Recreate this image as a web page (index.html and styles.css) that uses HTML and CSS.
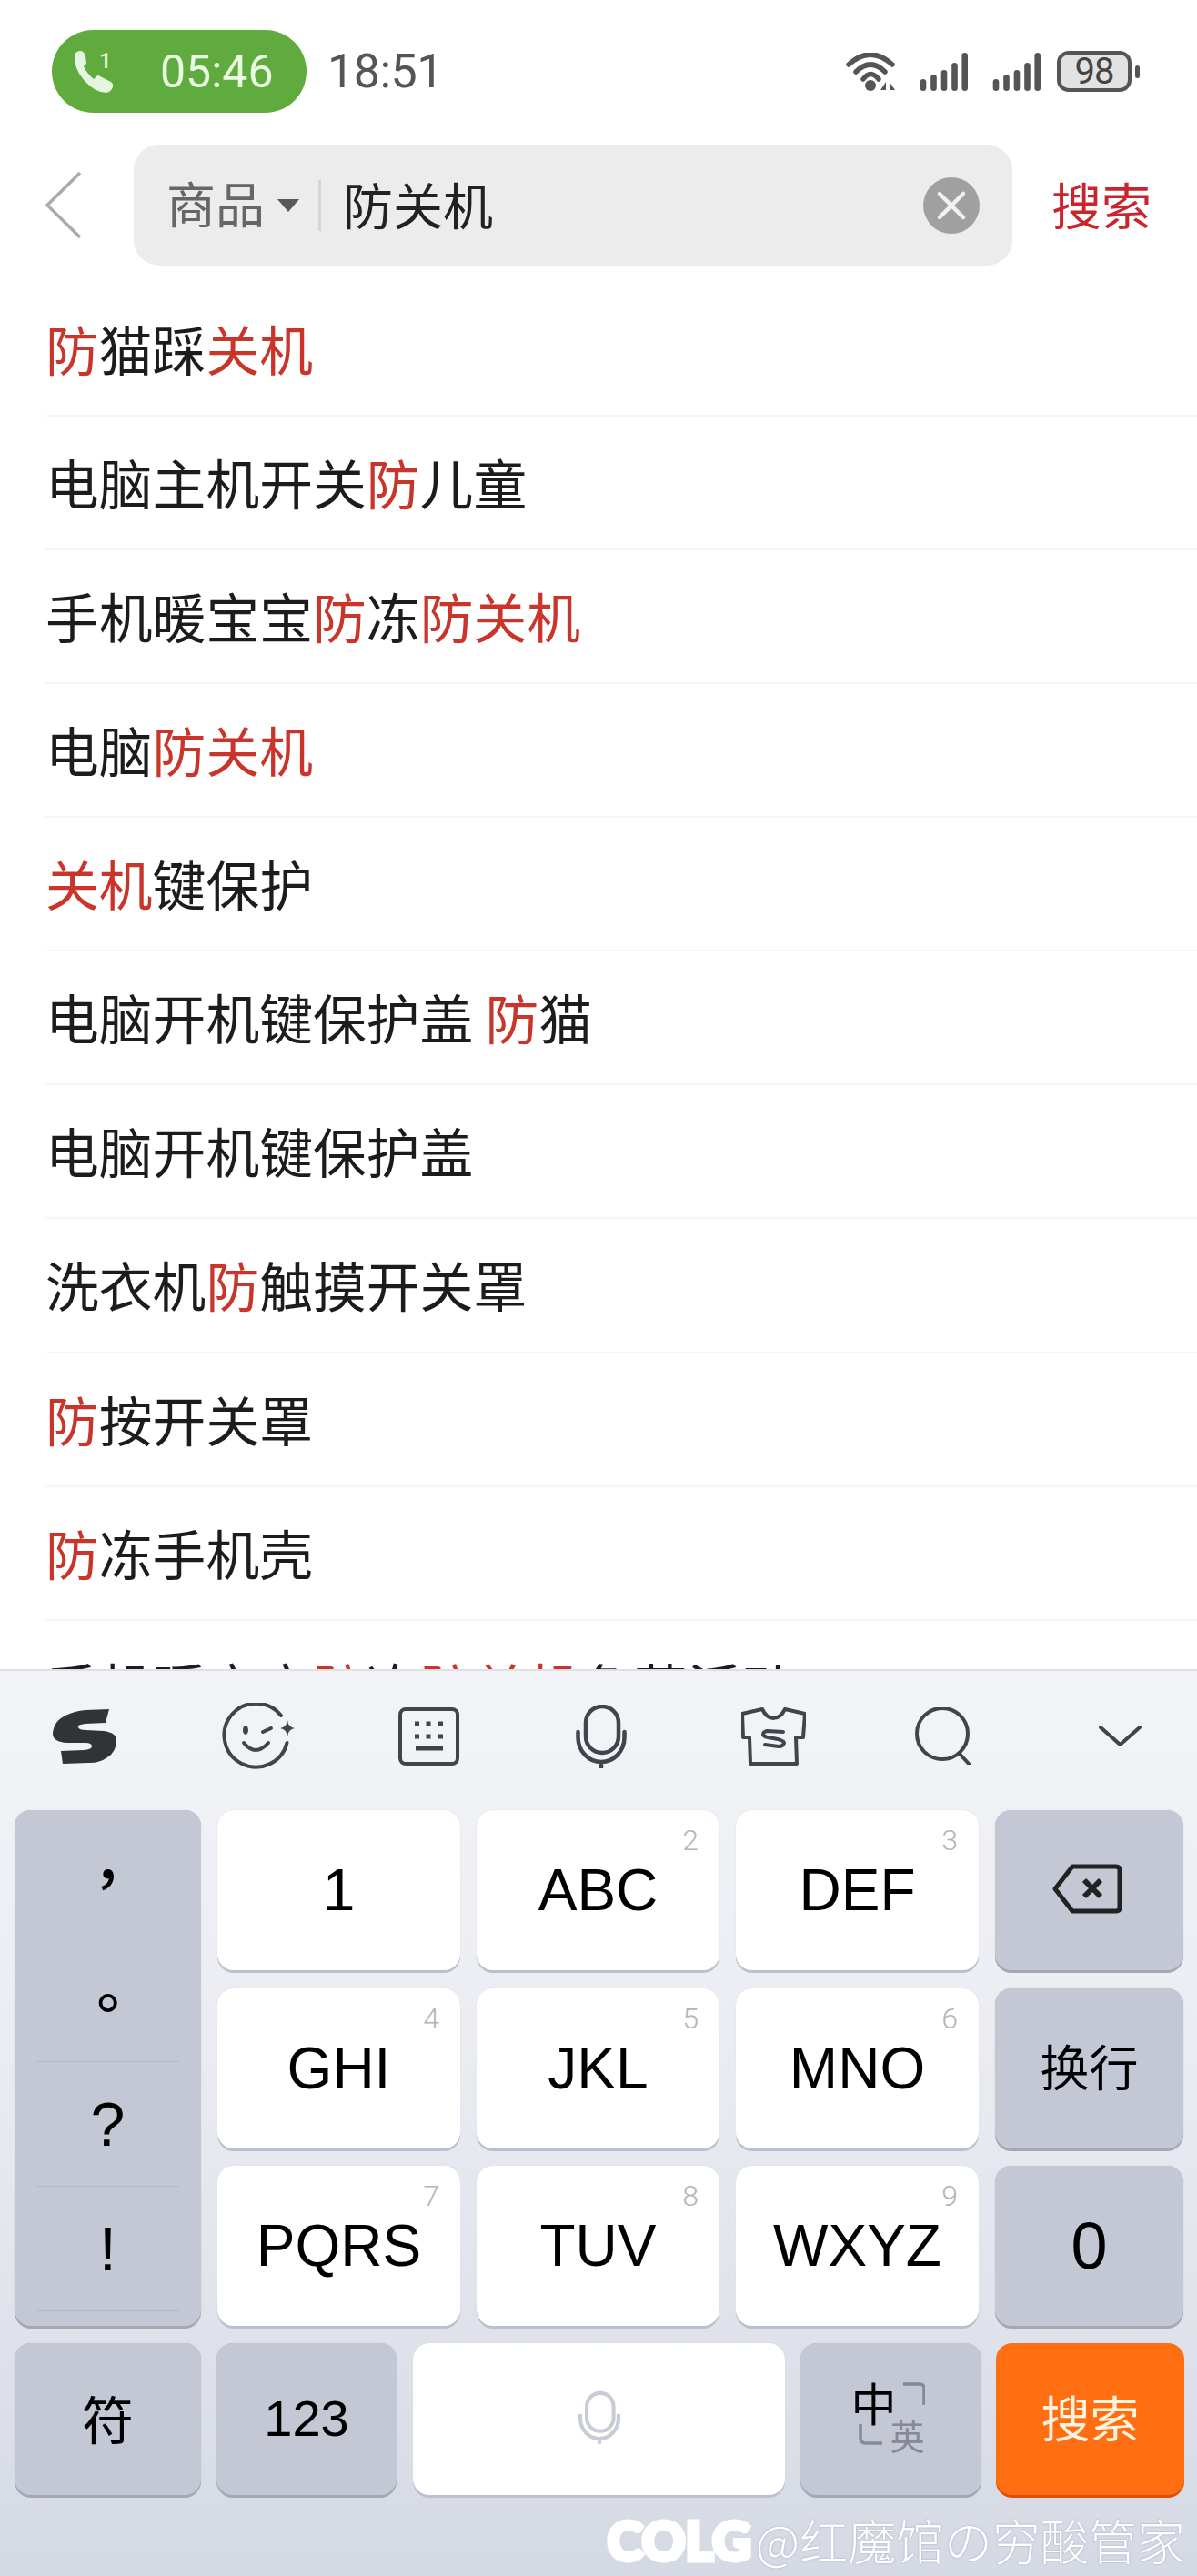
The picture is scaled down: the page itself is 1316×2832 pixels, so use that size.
FILE: index.html
```html
<!DOCTYPE html>
<html lang="zh">
<head>
    <meta charset="utf-8">
    <title>搜索</title>
    <link rel="stylesheet" href="styles.css">
</head>
<body>
<div class="phone">
    <header class="status-bar">
        <div class="call-pill">
            <svg class="call-icon" viewBox="0 0 46 46">
                <path d="M3 4Q5 0 10 0Q14 1 15 6L16 13Q16 15 13 17Q16 24 24 31L27 28Q29 26 31 28L43 34Q46 36 45 40Q43 45 38 46Q26 46 14 33Q2 20 3 4Z"/>
                <text x="30" y="19" class="call-line">1</text>
            </svg>
            <span class="call-time">05:46</span>
        </div>
        <span class="clock">18:51</span>
        <div class="status-icons">
            <svg class="wifi" viewBox="0 0 54 42">
                <path d="M3 13Q27 -9 51 13M11 21Q27 5 43 21M19 29Q27 18 36 29"/>
                <circle cx="27" cy="36" r="6"/>
                <path class="wifi-arrow" d="M44 32V41L38 41ZM48 32V41L54 41Z"/>
            </svg>
            <svg class="signal" viewBox="0 0 53 42">
                <rect x="0.7" y="29" width="6.6" height="13" rx="3.3"/>
                <rect x="12.2" y="24" width="6.6" height="18" rx="3.3"/>
                <rect x="23.7" y="19" width="6.6" height="23" rx="3.3"/>
                <rect x="35.2" y="11" width="6.6" height="31" rx="3.3"/>
                <rect x="46.4" y="0" width="6.6" height="42" rx="3.3"/>
            </svg>
            <svg class="signal" viewBox="0 0 53 42">
                <rect x="0.7" y="29" width="6.6" height="13" rx="3.3"/>
                <rect x="12.2" y="24" width="6.6" height="18" rx="3.3"/>
                <rect x="23.7" y="19" width="6.6" height="23" rx="3.3"/>
                <rect x="35.2" y="11" width="6.6" height="31" rx="3.3"/>
                <rect x="46.4" y="0" width="6.6" height="42" rx="3.3"/>
            </svg>
            <div class="battery"><span>98</span></div>
        </div>
    </header>

    <div class="search-bar">
        <svg class="back" viewBox="0 0 40 75"><path d="M38 2L2 37.5L38 73"/></svg>
        <div class="search-box">
            <span class="scope">商品</span>
            <span class="scope-caret"></span>
            <span class="scope-divider"></span>
            <span class="query">防关机</span>
            <svg class="clear" viewBox="0 0 62 62">
                <circle cx="31" cy="31" r="31"/>
                <path d="M18 18L44 44M44 18L18 44"/>
            </svg>
        </div>
        <span class="search-link">搜索</span>
    </div>

    <ul class="suggestions">
        <li><em>防</em>猫踩<em>关机</em></li>
        <li>电脑主机开关<em>防</em>儿童</li>
        <li>手机暖宝宝<em>防</em>冻<em>防关机</em></li>
        <li>电脑<em>防关机</em></li>
        <li><em>关机</em>键保护</li>
        <li>电脑开机键保护盖 <em>防</em>猫</li>
        <li>电脑开机键保护盖</li>
        <li>洗衣机<em>防</em>触摸开关罩</li>
        <li><em>防</em>按开关罩</li>
        <li><em>防</em>冻手机壳</li>
        <li>手机暖宝宝<em>防</em>冻<em>防关机</em>负荷活动</li>
    </ul>

    <section class="keyboard">
        <div class="toolbar">
            <svg class="tool-logo" viewBox="0 0 70 61">
                <path d="M62 1L58 16L36 17Q26 18 28 21Q29 24 36 24L56 25Q70 27 70 35Q70 48 60 54Q52 60 40 60L11 61L9 47L34 46Q43 45 43 42Q43 38 36 38L16 38Q0 37 0 28Q1 14 14 8Q24 3 36 2Z"/>
            </svg>
            <svg class="tool-emoji" viewBox="0 0 81 74">
                <path d="M65 14A35 35 0 1 0 71.5 44"/>
                <path class="tool-fill" d="M72 19Q73 27 80 28Q73 29 72 37Q71 29 64 28Q71 27 72 19Z"/>
                <ellipse class="tool-fill" cx="26" cy="30" rx="3" ry="5"/>
                <path d="M45 32L54 28M24 44Q37 60 51 44"/>
            </svg>
            <svg class="tool-keys" viewBox="0 0 67 64">
                <rect x="2" y="2" width="63" height="60" rx="6"/>
                <path class="tool-dots" d="M18 18H23M30.500 18H35.500M44 18H49M18 32H23M30.500 32H35.500M44 32H49"/>
                <path class="tool-bar" d="M19 45H49"/>
            </svg>
            <svg class="tool-mic mic" viewBox="0 0 56 70">
                <rect x="11" y="2" width="36" height="51" rx="18"/>
                <path d="M2.500 30V36A25.500 27 0 0 0 53.500 36V30M28 63V70"/>
            </svg>
            <svg class="tool-shirt" viewBox="0 0 71 64">
                <path d="M23 2Q28 12 35 12Q43 12 48 2L70 7L68 33H60L61 62H10L9 33H2L1 7Z"/>
                <path d="M46 27L28 26Q24 27 24 30Q25 33 35 34Q47 36 47 39Q46 43 41 43L26 41"/>
            </svg>
            <svg class="tool-search" viewBox="0 0 61 63">
                <circle cx="30" cy="29" r="28"/>
                <path d="M49 51L60 63"/>
            </svg>
            <svg class="tool-hide" viewBox="0 0 47 23"><path d="M2 2L23.500 21L45 2"/></svg>
        </div>

        <div class="keypad">
            <div class="key key-gray punct">
                <span class="punct-cell punct-cjk">，</span>
                <span class="punct-cell punct-cjk">。</span>
                <span class="punct-cell">?</span>
                <span class="punct-cell">!</span>
            </div>
            <div class="key"><span>1</span></div>
            <div class="key"><span>ABC</span><sup>2</sup></div>
            <div class="key"><span>DEF</span><sup>3</sup></div>
            <div class="key key-gray">
                <svg class="backspace" viewBox="0 0 77 55">
                    <path d="M22 3H70Q74 3 74 7V48Q74 52 70 52H22L3 27.500Z"/>
                    <path class="backspace-x" d="M35 18L53 36M53 18L35 36"/>
                </svg>
            </div>
            <div class="key"><span>GHI</span><sup>4</sup></div>
            <div class="key"><span>JKL</span><sup>5</sup></div>
            <div class="key"><span>MNO</span><sup>6</sup></div>
            <div class="key key-gray"><span class="key-cjk">换行</span></div>
            <div class="key"><span>PQRS</span><sup>7</sup></div>
            <div class="key"><span>TUV</span><sup>8</sup></div>
            <div class="key"><span>WXYZ</span><sup>9</sup></div>
            <div class="key key-gray"><span class="key-zero">0</span></div>
        </div>

        <div class="bottom-row">
            <div class="key key-gray key-symbol"><span class="key-cjk">符</span></div>
            <div class="key key-gray key-digits"><span class="key-num">123</span></div>
            <div class="key key-space">
                <svg class="space-mic mic" viewBox="0 0 56 70">
                    <rect x="11" y="2" width="36" height="51" rx="18"/>
                    <path d="M2.500 30V36A25.500 27 0 0 0 53.500 36V30M28 63V70"/>
                </svg>
            </div>
            <div class="key key-gray key-lang">
                <div class="lang">
                    <span class="lang-zh">中</span>
                    <span class="lang-en">英</span>
                    <svg class="lang-arrows" viewBox="0 0 73 69">
                        <path d="M49 2H67Q72 2 72 7V25M2 46V61Q2 67 8 67H26"/>
                    </svg>
                </div>
            </div>
            <div class="key key-go"><span class="key-cjk">搜索</span></div>
        </div>

        <div class="watermark"><span class="watermark-logo">COLG</span><span class="watermark-name">@红魔馆の穷酸管家</span></div>
    </section>
</div>
</body>
</html>
```

FILE: styles.css
```css
/* Page frame */
* {
    box-sizing: border-box;
}

html, body {
    margin: 0;
    padding: 0;
    background: #fff;
}

.phone {
    position: relative;
    display: flex;
    flex-direction: column;
    width: 1316px;
    height: 2832px;
    overflow: hidden;
    font-family: "Noto Sans CJK SC", "Liberation Sans", sans-serif;
}

/* Status bar */
.status-bar {
    display: flex;
    align-items: center;
    flex: none;
    height: 91px;
    margin-top: 33px;
    padding: 0 63px 0 57px;
}

.call-pill {
    display: flex;
    align-items: center;
    width: 280px;
    height: 91px;
    padding-left: 22px;
    border-radius: 46px;
    background: #5fab3d;
}

.call-icon {
    width: 46px;
    height: 46px;
    overflow: visible;
    fill: #e6f5de;
}

.call-line {
    font-family: Roboto, sans-serif;
    font-size: 24px;
    font-weight: 500;
}

.call-time {
    margin-left: 51px;
    font-family: Roboto, sans-serif;
    font-size: 50px;
    color: #e9fbe2;
}

.clock {
    margin-left: 23px;
    font-family: Roboto, sans-serif;
    font-size: 52px;
    letter-spacing: -0.5px;
    color: #555;
}

.status-icons {
    display: flex;
    align-items: center;
    margin-left: auto;
}

.wifi {
    width: 54px;
    height: 42px;
    fill: #555;
}

.wifi path {
    fill: none;
    stroke: #555;
    stroke-width: 5.5;
    stroke-linecap: round;
}

.wifi .wifi-arrow {
    fill: #555;
    stroke: none;
}

.signal {
    width: 53px;
    height: 42px;
    margin-left: 27px;
    fill: #555;
}

.battery {
    position: relative;
    display: flex;
    align-items: center;
    justify-content: center;
    width: 82px;
    height: 45px;
    margin-left: 18px;
    margin-right: 9px;
    border: 4px solid #555;
    border-radius: 13px;
    background: #e2e2e2;
    font-family: Roboto, sans-serif;
    font-size: 40px;
    letter-spacing: -1px;
    color: #444;
}

/* battery nub */
.battery::after {
    content: "";
    position: absolute;
    top: 12px;
    right: -13px;
    width: 5px;
    height: 14px;
    border-radius: 3px;
    background: #555;
}

/* Search bar */
.search-bar {
    display: flex;
    align-items: center;
    flex: none;
    height: 133px;
    margin: 35px 0 18.5px;
    padding-left: 50px;
}

.back {
    flex: none;
    width: 40px;
    height: 75px;
    fill: none;
    stroke: #aaa;
    stroke-width: 3.5;
}

.search-box {
    display: flex;
    align-items: center;
    flex: none;
    width: 966px;
    height: 133px;
    margin-left: 57px;
    padding: 0 36px;
    border-radius: 28px;
    background: #ececec;
}

.scope {
    margin-bottom: 6px;
    font-size: 54px;
    color: #666;
}

.scope-caret {
    width: 0;
    height: 0;
    margin-left: 14px;
    border-style: solid;
    border-width: 14px 12px 0;
    border-color: #58595c transparent transparent;
}

.scope-divider {
    width: 3px;
    height: 56px;
    margin-left: 21px;
    background: #d6d6d6;
}

.query {
    margin-bottom: 6px;
    margin-left: 24px;
    font-size: 55px;
    color: #222;
}

.clear {
    width: 62px;
    height: 62px;
    margin-left: auto;
    fill: #a0a0a0;
}

.clear path {
    fill: none;
    stroke: #f1f1f1;
    stroke-width: 4.5;
    stroke-linecap: round;
}

.search-link {
    margin-bottom: 6px;
    margin-left: 43px;
    font-size: 55px;
    color: #c9252c;
}

/* Suggestion list */
.suggestions {
    flex: 1;
    min-height: 0;
    margin: 0;
    padding: 0 0 0 50px;
    overflow: hidden;
    list-style: none;
}

.suggestions li {
    height: 147.15px;
    border-bottom: 2px solid #f6f6f6;
    font-size: 58.8px;
    line-height: 144px;
    white-space: nowrap;
    color: #1c1c1c;
}

.suggestions em {
    font-style: normal;
    color: #c9352b;
}

/* Keyboard */
.keyboard {
    flex: none;
    height: 997px;
    border-top: 2px solid #dfe0e3;
    background: linear-gradient(#f2f4f8 0%, #eceef3 35%, #e2e5ec 65%, #d5d9e3 100%);
}

.toolbar {
    display: grid;
    grid-template-columns: 186px 196px 178px 202px 176px 196px 182px;
    justify-items: center;
    align-items: center;
    height: 153px;
    padding-bottom: 10px;
}

.toolbar svg {
    fill: none;
    stroke: #42444c;
    stroke-width: 4;
    stroke-linecap: round;
    stroke-linejoin: round;
}

.toolbar .tool-logo {
    width: 70px;
    height: 61px;
    fill: #323336;
    stroke: none;
}

.tool-emoji {
    width: 81px;
    height: 74px;
}

.toolbar .tool-fill {
    fill: #42444c;
    stroke: none;
}

.tool-keys {
    width: 67px;
    height: 64px;
}

.toolbar .tool-dots {
    stroke-width: 5;
    stroke-linecap: butt;
}

.toolbar .tool-bar {
    stroke-width: 5;
    stroke-linecap: butt;
}

.tool-mic {
    width: 56px;
    height: 70px;
}

.toolbar .tool-mic {
    stroke-width: 4.5;
}

.tool-shirt {
    width: 71px;
    height: 64px;
}

.tool-search {
    width: 61px;
    height: 63px;
}

.tool-hide {
    justify-self: end;
    width: 47px;
    height: 23px;
    margin-right: 61px;
}

.keypad {
    display: grid;
    grid-template-columns: 205px 267px 267px 267px 207px;
    grid-auto-rows: 176px;
    gap: 19.5px 18px;
    padding-left: 16px;
}

.key {
    position: relative;
    display: flex;
    align-items: center;
    justify-content: center;
    border-radius: 18px;
    background: #fff;
    box-shadow: 0 3px 0 #bdc0cc, 0 0 1px #c9ccd6;
    font-family: "Liberation Sans", sans-serif;
    font-size: 64px;
    color: #000;
}

.key sup {
    position: absolute;
    top: 22px;
    right: 23px;
    font-family: Roboto, sans-serif;
    font-size: 32px;
    font-weight: 300;
    line-height: 23px;
    color: #b4b4b4;
}

.key-gray {
    background: #c3c8d4;
    box-shadow: 0 3px 0 #a4a7b6, 0 0 1px #a9adbb;
}

.key-cjk {
    margin-bottom: 6px;
    font-family: "Noto Sans CJK SC", sans-serif;
    font-size: 54px;
}

.key-zero {
    font-size: 72px;
}

.key-num {
    margin-bottom: 2px;
    font-size: 56px;
}

/* Punctuation column */
.punct {
    display: grid;
    grid-auto-rows: 137px;
    grid-row: span 3;
    align-items: stretch;
    align-content: start;
    justify-content: stretch;
    padding: 3px 24px 0;
}

.punct-cell {
    display: flex;
    align-items: center;
    justify-content: center;
    border-bottom: 1px solid #b4b9c7;
    font-size: 68px;
}

.punct-cjk {
    font-family: "Noto Sans CJK TC", sans-serif;
    font-size: 64px;
    font-weight: 500;
}

.backspace {
    width: 77px;
    height: 55px;
    margin: 0 4px 3px 0;
    fill: none;
    stroke: #222;
    stroke-width: 5;
    stroke-linejoin: round;
}

.backspace .backspace-x {
    stroke-width: 6;
}

/* Bottom row */
.bottom-row {
    display: flex;
    height: 167px;
    margin-top: 19px;
    padding-left: 16px;
}

.key-symbol {
    width: 205px;
}

.key-symbol .key-cjk {
    font-size: 57px;
}

.key-digits {
    width: 198px;
    margin-left: 17px;
}

.key-space {
    width: 409px;
    margin-left: 18px;
}

.key-lang {
    width: 199px;
    margin-left: 17px;
}

.key-go {
    width: 207px;
    margin-left: 16px;
    background: #ff6e10;
    box-shadow: 0 3px 0 #dd4f08;
    color: #fff4e2;
}

.space-mic {
    width: 46px;
    height: 60px;
    margin-bottom: 4px;
    fill: none;
    stroke: #c8ccd6;
    stroke-width: 5;
}

.lang {
    position: relative;
    width: 80px;
    height: 80px;
    margin-bottom: 8px;
}

.lang-zh {
    position: absolute;
    top: -10px;
    left: -4px;
    font-family: "Noto Sans CJK SC", sans-serif;
    font-size: 50px;
    line-height: 68px;
}

.lang-en {
    position: absolute;
    top: 40px;
    left: 39px;
    font-family: "Noto Sans CJK SC", sans-serif;
    font-size: 38px;
    line-height: 42px;
    color: #878995;
}

.lang-arrows {
    position: absolute;
    top: 3px;
    left: 4px;
    width: 73px;
    height: 69px;
    fill: none;
    stroke: #878995;
    stroke-width: 3.5;
}

/* Watermark on top of the keyboard */
.watermark {
    position: absolute;
    right: 13px;
    bottom: 2px;
    display: flex;
    align-items: center;
    color: #fff;
    text-shadow: 0 0 2px rgba(130, 138, 160, 0.7);
    white-space: nowrap;
}

.watermark-logo {
    margin-right: 5px;
    font-family: Lato, sans-serif;
    font-size: 59px;
    font-weight: 900;
    -webkit-text-stroke: 5px #fff;
    text-shadow: none;
}

.watermark-name {
    font-family: "Noto Sans CJK SC", sans-serif;
    font-size: 53px;
    font-weight: 300;
}
```
